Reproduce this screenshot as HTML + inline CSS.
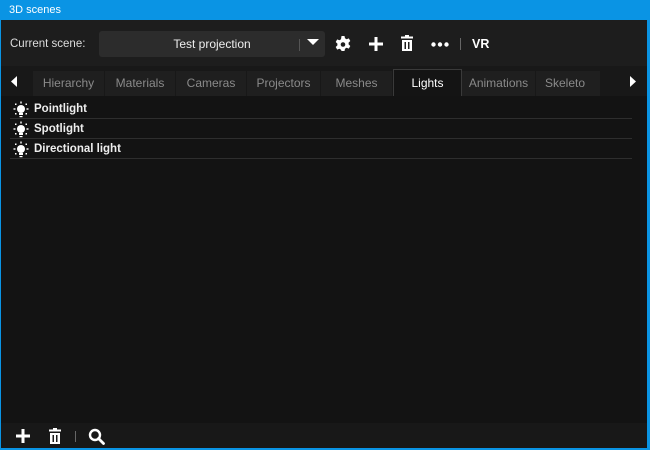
<!DOCTYPE html>
<html><head><style>
*{margin:0;padding:0;box-sizing:border-box}
body{width:650px;height:450px;background:#0a94e4;font-family:"Liberation Sans",sans-serif;overflow:hidden;position:relative}
.title{position:absolute;left:0;top:0;width:650px;height:20px;color:#fff;font-size:11px;line-height:20px;padding-left:9px}
.win{position:absolute;left:1px;top:20px;width:646px;height:428px;background:#181818}
.tb{position:absolute;left:0;top:0;width:646px;height:46px;background:#1d1d1d}
.lbl{position:absolute;left:9px;top:18px;color:#ddd;font-size:11.5px}
.dd{position:absolute;left:98px;top:11px;width:226px;height:26px;background:#2c2c2c;border-radius:3px;color:#eee;font-size:12px;text-align:center;line-height:26px}
.tabs{position:absolute;top:49px;left:0;width:646px;height:27px;background:#181818}
.tab{position:absolute;top:2px;height:25px;background:#1f1f1f;color:#8a8a8a;font-size:12px;line-height:25px;text-align:center}
.tab.act{background:#141414;border:1px solid #3a3a3a;border-bottom:none;color:#fff;top:0;height:27px;line-height:26px}
.list{position:absolute;top:76px;left:0;width:646px;height:327px;background:#131313}
.row{position:absolute;left:9px;width:622px;height:20px;border-bottom:1px solid #2e2e2e;color:#eee;font-size:11.5px;font-weight:bold;line-height:20px;padding-left:24px}
.bot{position:absolute;top:403px;left:0;width:646px;height:25px;background:#181818}
svg{position:absolute}
</style></head><body>
<div class="title">3D scenes</div>
<div class="win">
 <div class="tb">
  <div class="lbl">Current scene:</div>
  <div class="dd">Test projection</div>
  <div style="position:absolute;left:298px;top:19px;width:1px;height:12px;background:#555"></div>
  <svg style="left:306px;top:19px" width="12" height="7"><path d="M0 0H12L6 6Z" fill="#fff"/></svg>
  <svg style="left:334px;top:16px" width="16" height="16" viewBox="0 0 16 16"><path d="M6.5 0h3l.5 2.3 1.6.9 2.2-.8 1.5 2.6-1.7 1.6v1.8l1.7 1.6-1.5 2.6-2.2-.8-1.6.9-.5 2.3h-3L6 13.7l-1.6-.9-2.2.8L.7 11l1.7-1.6V7.6L.7 6l1.5-2.6 2.2.8L6 3.3z" fill="#fff"/><circle cx="8" cy="8.5" r="2.3" fill="#1d1d1d"/></svg>
  <svg style="left:368px;top:17px" width="14" height="14"><path d="M5.5 0h3v5.5H14v3H8.5V14h-3V8.5H0v-3h5.5z" fill="#fff"/></svg>
  <svg style="left:400px;top:15px" width="12" height="16"><path d="M4 0h4v1.5h4v2H0v-2h4zM1 5h10v11H1zM3.5 7v7h1.5V7zM7 7v7h1.5V7z" fill="#fff"/></svg>
  <svg style="left:430px;top:22px" width="18" height="5"><circle cx="2.5" cy="2.5" r="2.2" fill="#fff"/><circle cx="9" cy="2.5" r="2.2" fill="#fff"/><circle cx="15.5" cy="2.5" r="2.2" fill="#fff"/></svg>
  <div style="position:absolute;left:459px;top:18px;width:1px;height:12px;background:#666"></div>
  <div style="position:absolute;left:471px;top:17px;color:#fff;font-size:12.5px;font-weight:bold">VR</div>
 </div>
 <div class="tabs">
  <svg style="left:10px;top:7px" width="6" height="11"><path d="M6 0V11L0 5.5Z" fill="#fff"/></svg>
  <div class="tab" style="left:32px;width:71px">Hierarchy</div>
  <div class="tab" style="left:104px;width:70px">Materials</div>
  <div class="tab" style="left:175px;width:70px">Cameras</div>
  <div class="tab" style="left:246px;width:73px">Projectors</div>
  <div class="tab" style="left:320px;width:71px">Meshes</div>
  <div class="tab act" style="left:392px;width:69px">Lights</div>
  <div class="tab" style="left:461px;width:73px">Animations</div>
  <div class="tab" style="left:535px;width:64px;text-align:left;padding-left:9px">Skeleto</div>
  <svg style="left:629px;top:7px" width="6" height="11"><path d="M0 0V11L6 5.5Z" fill="#fff"/></svg>
 </div>
 <div class="list">
  <div class="row" style="top:3px">Pointlight</div>
  <div class="row" style="top:23px">Spotlight</div>
  <div class="row" style="top:43px">Directional light</div>
  <svg style="left:12px;top:5px" width="16" height="60" viewBox="0 0 16 60">
   <g id="b" fill="#fff"><circle cx="8" cy="8" r="4"/><rect x="6" y="12" width="4" height="2"/><rect x="6.5" y="15" width="3" height="1.2"/><rect x="7.3" y="0.5" width="1.4" height="2"/><rect x="0.5" y="7.3" width="2" height="1.4"/><rect x="13.5" y="7.3" width="2" height="1.4"/><rect x="2" y="2.5" width="1.5" height="1.5"/><rect x="12.5" y="2.5" width="1.5" height="1.5"/><rect x="2" y="12" width="1.5" height="1.5"/><rect x="12.5" y="12" width="1.5" height="1.5"/></g>
   <use href="#b" y="20"/><use href="#b" y="40"/>
  </svg>
 </div>
 <div class="bot">
  <svg style="left:15px;top:6px" width="14" height="14"><path d="M5.5 0h3v5.5H14v3H8.5V14h-3V8.5H0v-3h5.5z" fill="#fff"/></svg>
  <svg style="left:48px;top:5px" width="12" height="16"><path d="M4 0h4v1.5h4v2H0v-2h4zM1 5h10v11H1zM3.5 7v7h1.5V7zM7 7v7h1.5V7z" fill="#fff"/></svg>
  <div style="position:absolute;left:74px;top:8px;width:1px;height:11px;background:#666"></div>
  <svg style="left:87px;top:5px" width="17" height="17"><circle cx="7" cy="7" r="5" fill="none" stroke="#fff" stroke-width="2.4"/><path d="M10.5 10.5L15.5 15.5" stroke="#fff" stroke-width="2.8" stroke-linecap="round"/></svg>
 </div>
</div>
</body></html>
